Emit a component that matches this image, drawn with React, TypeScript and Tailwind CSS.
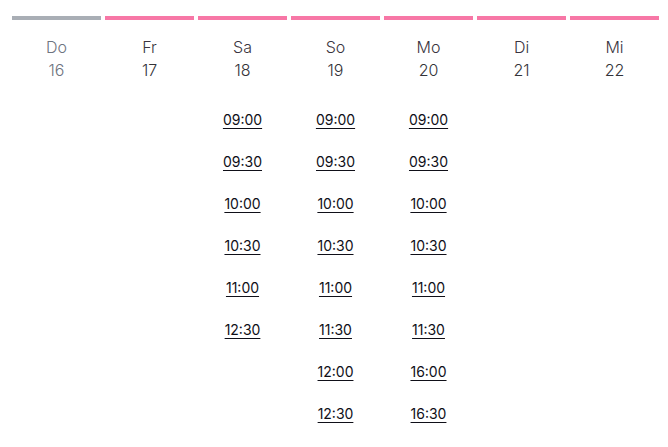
import React from 'react';

interface Day {
  name: string;
  date: number;
  disabled?: boolean;
  slots: string[];
}

const days: Day[] = [
  { name: 'Do', date: 16, disabled: true, slots: [] },
  { name: 'Fr', date: 17, slots: [] },
  { name: 'Sa', date: 18, slots: ['09:00', '09:30', '10:00', '10:30', '11:00', '12:30'] },
  { name: 'So', date: 19, slots: ['09:00', '09:30', '10:00', '10:30', '11:00', '11:30', '12:00', '12:30'] },
  { name: 'Mo', date: 20, slots: ['09:00', '09:30', '10:00', '10:30', '11:00', '11:30', '16:00', '16:30'] },
  { name: 'Di', date: 21, slots: [] },
  { name: 'Mi', date: 22, slots: [] },
];

const DayColumn: React.FC<{ day: Day }> = ({ day }) => {
  return (
    <div className="flex flex-col items-center">
      <div className={`h-[4px] w-full ${day.disabled ? 'bg-[#a9aeb5]' : 'bg-[#f777a6]'}`} />
      <div className={`mt-[16px] text-[16px] font-light leading-[22px] ${day.disabled ? 'text-[#6e7480]' : 'text-[#3a3440]'}`}>
        {day.name}
      </div>
      <div className={`mt-[1px] text-[16px] font-light leading-[22px] ${day.disabled ? 'text-[#6e7480]' : 'text-[#333338]'}`}>
        {day.date}
      </div>
      <div className="mt-[29px] flex flex-col items-center gap-y-[22px]">
        {day.slots.map((s) => (
          <a
            key={s}
            href="#"
            className="text-[14px] leading-[20px] text-[#0f0f18] underline underline-offset-[3px] decoration-[1px]"
          >
            {s}
          </a>
        ))}
      </div>
    </div>
  );
};

export default function App() {
  return (
    <div
      className="w-[668px] h-[447px] bg-white pt-[16px] pl-[12px] overflow-hidden"
      style={{ fontFamily: 'Inter, "Noto Sans", sans-serif' }}
    >
      <div className="grid w-[647px] grid-cols-7 gap-x-[4px]">
        {days.map((d) => (
          <DayColumn key={d.name} day={d} />
        ))}
      </div>
    </div>
  );
}
